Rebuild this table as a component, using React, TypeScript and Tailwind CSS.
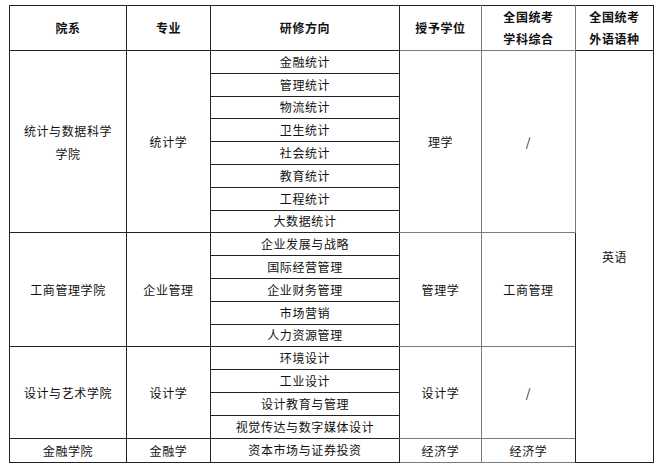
import React from "react";

type Group = {
  dept: string[];
  major: string;
  dirs: string[];
  degree: string;
  subject: string;
};

const groups: Group[] = [
  {
    dept: ["统计与数据科学", "学院"],
    major: "统计学",
    dirs: ["金融统计", "管理统计", "物流统计", "卫生统计", "社会统计", "教育统计", "工程统计", "大数据统计"],
    degree: "理学",
    subject: "/",
  },
  {
    dept: ["工商管理学院"],
    major: "企业管理",
    dirs: ["企业发展与战略", "国际经营管理", "企业财务管理", "市场营销", "人力资源管理"],
    degree: "管理学",
    subject: "工商管理",
  },
  {
    dept: ["设计与艺术学院"],
    major: "设计学",
    dirs: ["环境设计", "工业设计", "设计教育与管理", "视觉传达与数字媒体设计"],
    degree: "设计学",
    subject: "/",
  },
  {
    dept: ["金融学院"],
    major: "金融学",
    dirs: ["资本市场与证券投资"],
    degree: "经济学",
    subject: "经济学",
  },
];

const totalRows = groups.reduce((n, g) => n + g.dirs.length, 0);

const cell = "border border-[#222] text-center align-middle p-0";
const grayR = "border-r-[#7a7a7a] border-b-[#7a7a7a]";

export default function App() {
  return (
    <div
      className="w-[669px] h-[471px] bg-white pt-[5px] pl-[9px] text-[12px] tracking-[0.6px] text-[#111]"
      style={{ fontFamily: '"Noto Sans CJK SC", "Noto Sans", sans-serif' }}
    >
      <table className="table-fixed border-collapse w-[644px] leading-[23px]">
        <colgroup>
          <col className="w-[117px]" />
          <col className="w-[84px]" />
          <col className="w-[189px]" />
          <col className="w-[82px]" />
          <col className="w-[94px]" />
          <col className="w-[78px]" />
        </colgroup>
        <thead>
          <tr className="h-[45px] font-bold leading-[22px]">
            <th className={cell}>院系</th>
            <th className={cell}>专业</th>
            <th className={cell}>研修方向</th>
            <th className={`${cell} ${grayR}`}>授予学位</th>
            <th className={`${cell} ${grayR}`}>
              全国统考
              <br />
              学科综合
            </th>
            <th className={cell}>
              全国统考
              <br />
              外语语种
            </th>
          </tr>
        </thead>
        <tbody>
          {groups.map((g, gi) =>
            g.dirs.map((d, i) => (
              <tr key={`${gi}-${i}`} className="h-[22.8px]">
                {i === 0 && (
                  <>
                    <td rowSpan={g.dirs.length} className={cell}>
                      {g.dept.map((line, k) => (
                        <div key={k}>{line}</div>
                      ))}
                    </td>
                    <td rowSpan={g.dirs.length} className={cell}>
                      {g.major}
                    </td>
                  </>
                )}
                <td className={`${cell} leading-[20px]`}>{d}</td>
                {i === 0 && (
                  <>
                    <td rowSpan={g.dirs.length} className={`${cell} ${grayR}`}>
                      {g.degree}
                    </td>
                    <td rowSpan={g.dirs.length} className={`${cell} ${grayR}`}>
                      {g.subject}
                    </td>
                  </>
                )}
                {gi === 0 && i === 0 && (
                  <td rowSpan={totalRows} className={cell}>
                    英语
                  </td>
                )}
              </tr>
            ))
          )}
        </tbody>
      </table>
    </div>
  );
}
